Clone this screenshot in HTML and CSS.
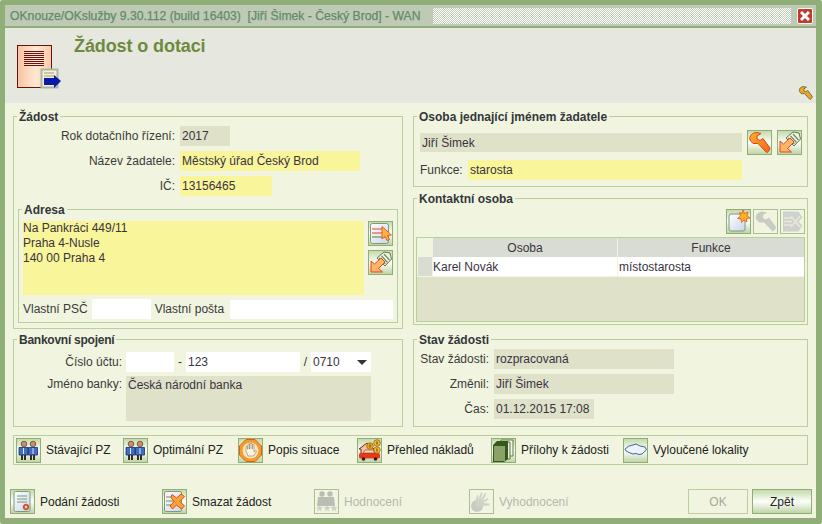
FILE: index.html
```html
<!DOCTYPE html>
<html lang="cs">
<head>
<meta charset="utf-8">
<title>OKnouze/OKslužby</title>
<link rel="stylesheet" href="styles.css">
</head>
<body>
<svg class="defs" width="0" height="0" aria-hidden="true">
  <defs>
    <linearGradient id="pg" x1="0" x2="1" y1="0" y2="0"><stop offset="0" stop-color="#f7c3a0"/><stop offset=".55" stop-color="#fde9d3"/><stop offset="1" stop-color="#f8c8a6"/></linearGradient>
    <linearGradient id="or" x1="0" x2="1" y1="0" y2="1"><stop offset="0" stop-color="#ffb030"/><stop offset="1" stop-color="#f0651c"/></linearGradient>
    <linearGradient id="blu" x1="0" x2="1" y1="0" y2="1"><stop offset="0" stop-color="#fff"/><stop offset="1" stop-color="#c9d4ec"/></linearGradient>
    <symbol id="i-wrench" viewBox="0 0 25 25"><path d="M3 10C2 6 5 2.500 10 2.500l4 1L10 6v3l3 1.500 3-2 7 9.500c0 2-2 4.500-3.500 4.500L11 13.500H6z" fill="url(#or)" stroke="#d9480f" stroke-linejoin="round"/></symbol>
    <symbol id="i-wrench-mini" viewBox="0 0 25 25"><path d="M3 10C2 6 5 2.500 10 2.500l4 1L10 6v3l3 1.500 3-2 7 9.500c0 2-2 4.500-3.500 4.500L11 13.500H6z" fill="#eda428" stroke="#76702c" stroke-width="1.500" stroke-linejoin="round"/></symbol>
    <symbol id="i-wrench-off" viewBox="0 0 25 25"><path d="M3 10C2 6 5 2.500 10 2.500l4 1L10 6v3l3 1.500 3-2 7 9.500c0 2-2 4.500-3.500 4.500L11 13.500H6z" fill="#c9cbc4"/></symbol>
    <symbol id="i-pick" viewBox="0 0 25 25"><path d="M9 8 16 2l6 1 1.500 6L17 16z" fill="#eef3e6" stroke="#5d7a45"/><path d="M11 8l6.500 6M13.500 6l6 6.500M16 4l5.500 6" stroke="#6f8f5d" stroke-width="1.300"/><path d="M3 22V11l3.500 3L13 8l4 4-6.500 6.500L14.500 22z" fill="#ffb468" stroke="#e0481c" stroke-linejoin="round"/></symbol>
    <symbol id="i-list" viewBox="0 0 25 25"><rect x="2.500" y="2.500" width="18" height="20" rx="2" fill="url(#blu)" stroke="#7f9a75"/><path d="M4 8h13M4 12h13" stroke="#e0481c" stroke-width="1.200"/><path d="M4 16h13" stroke="#6a9a4f" stroke-width="1.200"/><path d="M14 5.500 23.500 14l-4 .5 2 4-2.500 1-2-4-3 2.500z" fill="#ffb347" stroke="#d9480f" stroke-width=".8"/></symbol>
    <symbol id="i-new" viewBox="0 0 25 25"><rect x="3" y="5" width="16" height="17" rx="2" fill="url(#blu)" stroke="#7f9a75"/><path d="m17 1 1.500 3.500L22 3l-1 3.500L24 9l-3.500.5L21 13l-3-2-2.500 2.500-.5-3.500-3.500-.5 3-2.500L13.500 3.500 16 4.500z" fill="#ffb020" stroke="#e0581c" stroke-width=".8"/></symbol>
    <symbol id="i-del-off" viewBox="0 0 25 25"><path d="M3 2.500h15.500l4 6-4 4 4 4-4 6H3z" fill="#cfd1ca"/><path d="M4 9h8M4 12.500h8M4 16h8M11 7l9 11M20 7l-9 11" stroke="#e6e8e0" stroke-width="1.400"/></symbol>
    <symbol id="i-people" viewBox="0 0 25 25"><circle cx="8" cy="6" r="2.800" fill="#c98f6a" stroke="#5b3a24" stroke-width=".7"/><path d="M3 9.500h9V17H3z" fill="#3e6fc2" stroke="#13306e" stroke-width=".8"/><path d="M5 17h2v5H5zM8 17h2v5H8z" fill="#3c2a1e"/><circle cx="17" cy="6" r="2.800" fill="#c98f6a" stroke="#5b3a24" stroke-width=".7"/><path d="M12.500 9.500h9V17h-9z" fill="#3e6fc2" stroke="#13306e" stroke-width=".8"/><path d="M14 17h2v5h-2zM17 17h2v5h-2z" fill="#3c2a1e"/><path d="M7.500 10v6M17 10v6" stroke="#dfe8f7"/></symbol>
    <symbol id="i-stop" viewBox="0 0 25 25"><path d="M8 1.500h9L23.500 8v9L17 23.500H8L1.500 17V8z" fill="#f59a2c" stroke="#d9620f"/><circle cx="12.500" cy="12.500" r="8" fill="#fde7b8"/><path d="M8 13V8.500h1.500V11h.5V6h1.500v5h.5V5.500H14V11h.5V6.500H16V14l1.500-1.500 1 .8-3 4.700h-5.500z" fill="#f6f5ea" stroke="#8a7f5c" stroke-width=".6"/></symbol>
    <symbol id="i-cost" viewBox="0 0 25 25"><path d="M2 11 10 5l7 6v5H4v-5z" fill="#efc4a0" stroke="#7a2a12"/><rect x="2" y="15" width="21" height="5.500" rx="1.500" fill="#e23a1a"/><path d="M6 15l2-3h8l2 3z" fill="#f7d9c0" stroke="#a12610" stroke-width=".6"/><circle cx="6.500" cy="21" r="1.800" fill="#3a1a10"/><circle cx="18.500" cy="21" r="1.800" fill="#3a1a10"/><circle cx="13" cy="8" r="3.300" fill="#e8a820" stroke="#8a5a08" stroke-width=".7"/><circle cx="20" cy="5" r="3.300" fill="#f2bb30" stroke="#8a5a08" stroke-width=".7"/><circle cx="20" cy="12" r="3.300" fill="#f2bb30" stroke="#8a5a08" stroke-width=".7"/><path d="M20 3.500v3M20 10.500v3M13 6.500v3" stroke="#5a3a04"/></symbol>
    <symbol id="i-files" viewBox="0 0 25 25"><path d="M10 2h12v16H10z" fill="#f2f4ec" stroke="#5d7a45"/><path d="M7 4h12v17H7z" fill="#e6ebdc" stroke="#5d7a45"/><path d="M2 7l4-4h11v18l-4 3H2z" fill="#35581f"/><path d="M3 8h11v15H3z" fill="#8aa267"/></symbol>
    <symbol id="i-cloud" viewBox="0 0 25 25"><path d="M2 11 6 8l4-1 3-1 4 2 5 1 1.500 3-2.500 2-2 2-3 .5-3-1-3 .5-4-1.500-3-1.500z" fill="#eef2fb" stroke="#3d68a8"/></symbol>
    <symbol id="i-cert" viewBox="0 0 25 25"><rect x="4" y="2.500" width="16" height="20" rx="1.500" fill="url(#blu)" stroke="#7f9a75"/><path d="M7 7h10M7 10h10M7 13h10" stroke="#7f9a75"/><circle cx="16" cy="18" r="2.800" fill="#e8603a" stroke="#b83a1a" stroke-width=".7"/><circle cx="16" cy="18" r="1" fill="#fff"/></symbol>
    <symbol id="i-docx" viewBox="0 0 25 25"><rect x="2.500" y="2.500" width="17" height="20" rx="1.500" fill="url(#blu)" stroke="#7f9a75"/><path d="M4 8h8M4 12h8M4 16h8" stroke="#6f8f5d"/><path d="M10 5.500 14.500 9l4.500-4 3.500 2.500-4.500 5 4.500 4.500-3 3-5-4-4 4-2.500-3 4-4.500-3-4z" fill="#f6a535" stroke="#e0481c"/></symbol>
    <symbol id="i-eval-off" viewBox="0 0 25 25"><g fill="#babdb3"><circle cx="8" cy="5" r="2.700"/><circle cx="16" cy="5" r="2.700"/><path d="M4 8h8l1 9H3zM12 8h8l1 9h-8z"/></g><g fill="#cdd0c7"><path d="M2 18l2.500 0 1-1.500 1 1.500H9l-2 2 1 2.500-2.500-1.500L3 22.500l1-2.500zM9.500 18H12l1-1.500 1 1.500h2.500l-2 2 1 2.500-2.500-1.500-2.500 1.500 1-2.500zM16.500 18H19l1-1.500 1 1.500h2.500l-2 2 1 2.500-2.500-1.500-2.500 1.500 1-2.500z"/></g></symbol>
    <symbol id="i-hand-off" viewBox="0 0 25 25"><circle cx="8" cy="17" r="6" fill="#c8cbc2"/><path d="M6 14l2-8 1.500.5L9 11.500l3-8 1.500.5-2 7 4.500-7 1.500 1-4 7 5-3 1 1.500-5 3.500 6 .5v2l-8 .5-4 2z" fill="#cfd2c9"/></symbol>
  </defs>
</svg>

<div class="window">
  <div class="titlebar">
    <span class="apptitle">OKnouze/OKslužby 9.30.112 (build 16403)&nbsp; [Jiří Šimek - Český Brod] - WAN</span>
    <span class="grip"></span>
    <span class="close" aria-label="Zavřít">
      <svg width="12" height="12" viewBox="0 0 12 12"><path d="M2 2l8 8M10 2l-8 8" stroke="#fff" stroke-width="3"/></svg>
    </span>
  </div>

  <header class="header">
    <svg class="bigicon" width="46" height="44" viewBox="0 0 46 44">
      <rect x=".5" y=".5" width="34" height="42" fill="url(#pg)" stroke="#6b1010"/>
      <path d="M7 6.500h20M7 8.500h20M7 10.500h20M7 12.500h20M7 14.500h20M7 16.500h20M7 18.500h20M7 20.500h20" stroke="#6b1010"/>
      <rect x="24.500" y="24.500" width="16" height="18" fill="#fbf0c4" stroke="#a9b5ae" stroke-width="2"/>
      <path d="M27 28h10M27 31h10" stroke="#8aa0a8"/>
      <path d="M27 33h10v-3l7 6-7 7v-3H27z" fill="#0a1aa8"/>
    </svg>
    <h1 class="pagetitle">Žádost o dotaci</h1>
    <svg class="miniwrench" width="17" height="16" viewBox="0 0 25 25"><use href="#i-wrench-mini"/></svg>
  </header>

  <main class="main">
    <div class="grid">
      <fieldset class="box box-zadost">
        <legend>Žádost</legend>
        <div class="row row-first"><label class="lab lab-w">Rok dotačního řízení:</label><span class="fld ro w50">2017</span></div>
        <div class="row"><label class="lab lab-w">Název žadatele:</label><span class="fld req w180">Městský úřad Český Brod</span></div>
        <div class="row"><label class="lab lab-w">IČ:</label><span class="fld req w92">13156465</span></div>
        <fieldset class="box box-adresa">
          <legend>Adresa</legend>
          <div class="addr">
            <div class="fld req area">Na Pankráci 449/11<br>Praha 4-Nusle<br>140 00 Praha 4</div>
            <div class="addr-btns">
              <button class="ibtn"><svg width="25" height="25"><use href="#i-list"/></svg></button>
              <button class="ibtn"><svg width="25" height="25"><use href="#i-pick"/></svg></button>
            </div>
          </div>
          <div class="row row-own">
            <label class="lab-plain">Vlastní PSČ</label><span class="fld wh w59"></span>
            <label class="lab-plain">Vlastní pošta</label><span class="fld wh w163"></span>
          </div>
        </fieldset>
      </fieldset>

      <div class="stack">
        <fieldset class="box box-osoba">
          <legend>Osoba jednající jménem žadatele</legend>
          <div class="osoba-grid">
            <div class="osoba-fields">
              <span class="fld ro w322 h19">Jiří Šimek</span>
              <div class="row row-fn"><label class="lab-plain">Funkce:</label><span class="fld req w274">starosta</span></div>
            </div>
            <div class="osoba-btns">
              <button class="ibtn"><svg width="25" height="25"><use href="#i-wrench"/></svg></button>
              <button class="ibtn"><svg width="25" height="25"><use href="#i-pick"/></svg></button>
            </div>
          </div>
        </fieldset>
        <fieldset class="box box-kontakt">
          <legend>Kontaktní osoba</legend>
          <div class="tools">
            <button class="ibtn"><svg width="25" height="25"><use href="#i-new"/></svg></button>
            <button class="ibtn off"><svg width="25" height="25"><use href="#i-wrench-off"/></svg></button>
            <button class="ibtn off"><svg width="25" height="25"><use href="#i-del-off"/></svg></button>
          </div>
          <div class="table">
            <div class="thead"><span class="corner"></span><span class="th c1">Osoba</span><span class="th c2">Funkce</span></div>
            <div class="trow"><span class="rowhead"></span><span class="td c1">Karel Novák</span><span class="td c2">místostarosta</span></div>
          </div>
        </fieldset>
      </div>

      <fieldset class="box box-bank">
        <legend>Bankovní spojení</legend>
        <div class="row row-acct"><label class="lab lab-b">Číslo účtu:</label>
          <span class="fld wh w48"></span><span class="sep sep-d">-</span><span class="fld wh w114">123</span><span class="sep sep-s">/</span>
          <span class="fld wh w60 select">0710<i class="caret"></i></span>
        </div>
        <div class="row row-tight"><label class="lab lab-b">Jméno banky:</label><div class="fld ro bankname">Česká národní banka</div></div>
      </fieldset>

      <fieldset class="box box-stav">
        <legend>Stav žádosti</legend>
        <div class="row row-stav"><label class="lab lab-s">Stav žádosti:</label><span class="fld ro w180">rozpracovaná</span></div>
        <div class="row"><label class="lab lab-s">Změnil:</label><span class="fld ro w180">Jiří Šimek</span></div>
        <div class="row"><label class="lab lab-s">Čas:</label><span class="fld ro w100">01.12.2015 17:08</span></div>
      </fieldset>
    </div>

    <nav class="actions">
      <a class="act a1"><span class="ibtn"><svg width="25" height="25"><use href="#i-people"/></svg></span>Stávající PZ</a>
      <a class="act a2"><span class="ibtn"><svg width="25" height="25"><use href="#i-people"/></svg></span>Optimální PZ</a>
      <a class="act a3"><span class="ibtn"><svg width="25" height="25"><use href="#i-stop"/></svg></span>Popis situace</a>
      <a class="act a4"><span class="ibtn"><svg width="25" height="25"><use href="#i-cost"/></svg></span>Přehled nákladů</a>
      <a class="act a5"><span class="ibtn"><svg width="25" height="25"><use href="#i-files"/></svg></span>Přílohy k žádosti</a>
      <a class="act"><span class="ibtn"><svg width="25" height="25"><use href="#i-cloud"/></svg></span>Vyloučené lokality</a>
    </nav>

    <footer class="footer">
      <a class="act b1"><span class="ibtn"><svg width="25" height="25"><use href="#i-cert"/></svg></span>Podání žádosti</a>
      <a class="act b2"><span class="ibtn"><svg width="25" height="25"><use href="#i-docx"/></svg></span>Smazat žádost</a>
      <a class="act b3 dis"><span class="ibtn off"><svg width="25" height="25"><use href="#i-eval-off"/></svg></span>Hodnocení</a>
      <a class="act dis"><span class="ibtn off"><svg width="25" height="25"><use href="#i-hand-off"/></svg></span>Vyhodnocení</a>
      <button class="btn btn-off">OK</button>
      <button class="btn">Zpět</button>
    </footer>
  </main>
</div>
</body>
</html>
```

FILE: styles.css
```css
* { box-sizing: border-box; }
html, body { margin: 0; padding: 0; background: #fff; }
body { width: 822px; height: 524px; overflow: hidden; font: 12px/14px "Liberation Sans", Arial, sans-serif; color: #3a3a3a; }
.defs { position: absolute; }

.window { width: 822px; height: 524px; display: flex; flex-direction: column; border: solid #90ae78; border-width: 5px 6px 6px 5px; border-radius: 2px; background: #f1f5df; }

.titlebar { flex: none; height: 23px; display: flex; align-items: center; background: #bfcab5; border-bottom: 2px solid #90ae78; padding: 0 3px 0 5px; }
.apptitle { flex: none; width: 423px; font-size: 12.2px; -webkit-text-stroke: 0.25px #628a6a; color: #628a6a; white-space: nowrap; overflow: hidden; }
.grip { flex: none; width: 358px; height: 16px; background: repeating-conic-gradient(#fff 0 25%, #bfcab5 0 50%) 0 0 / 2px 2px; }
.close { flex: none; width: 16px; height: 16px; margin-left: 6px; display: flex; align-items: center; justify-content: center; background: #c23a2a; border: 1px solid #fff; border-radius: 2px; }

.header { flex: none; height: 75px; display: flex; background: #e6e8df; padding: 17px 0 0 12px; }
.bigicon { flex: none; }
.pagetitle { flex: none; margin: -10px 0 0 11px; font-size: 18px; line-height: 22px; letter-spacing: -0.1px; font-weight: bold; color: #6e8a3e; }
.miniwrench { margin: 40px 0 0 591px; flex: none; }

.main { flex: 1; min-height: 0; padding: 6px 0 0 8px; display: flex; flex-direction: column; }
.grid { display: grid; grid-template-columns: 390px 395px; column-gap: 10px; grid-template-rows: 220px 95px; row-gap: 3px; }

.box { margin: 0; padding: 0; min-width: 0; border: 1px solid #b9d09c; }
.box legend { margin-left: 3px; padding: 0 2px; font-weight: bold; height: 14px; line-height: 16px; color: #33373a; }
.box-bank legend { letter-spacing: -0.25px; }

.stack { display: flex; flex-direction: column; }
.row { display: flex; align-items: center; margin-top: 5px; }
.row-first { margin-top: 3px; }
.row-acct { margin-top: 6px; }

.lab { flex: none; text-align: right; margin-right: 5px; }
.lab-w { width: 161px; }
.lab-b { width: 108px; margin-right: 4px; }
.lab-s { width: 75px; margin-right: 5px; }
.lab-plain { flex: none; }

.fld { display: block; flex: none; height: 20px; line-height: 18px; padding: 1px 2px; white-space: nowrap; color: #3a3340; }
.ro { background: #dfe1c9; }
.req { background: #f8f59a; }
.wh { background: #fff; }
.w48 { width: 48px; }
.w50 { width: 50px; }
.w59 { width: 59px; }
.w60 { width: 60px; }
.w92 { width: 92px; }
.w100 { width: 100px; }
.w114 { width: 114px; }
.w163 { width: 163px; }
.w180 { width: 180px; }
.w274 { width: 274px; }
.w322 { width: 322px; }
.h19 { height: 19px; line-height: 18px; }

.box-zadost { height: 220px; }
.box-adresa { margin: 6px 4px 0; height: 121px; }
.addr { display: flex; margin: 5px 0 0 4px; }
.area { width: 341px; height: 74px; line-height: 15px; padding: 0; white-space: normal; }
.addr-btns { display: flex; flex-direction: column; gap: 4px; margin-left: 4px; }
.row-own { margin: 4px 0 0 4px; }
.row-own .w59 { margin: 0 4px; }
.row-own .w163 { margin-left: 6px; height: 19px; }

.ibtn { display: block; flex: none; width: 25px; height: 25px; padding: 0; margin: 0; border: 1px solid #8fae75; background: linear-gradient(#c5d9ad, #fdfefb 50%, #bfd5a6); overflow: hidden; }
.ibtn svg { display: block; margin: -1px; }
.ibtn.off { background: #f1f5df; border-color: #a9c190; }

.box-osoba { height: 78px; }
.osoba-grid { display: flex; margin: 0 0 0 6px; }
.osoba-fields { width: 322px; margin-top: 10px; }
.row-fn { margin-top: 8px; }
.row-fn .lab-plain { width: 48px; }
.osoba-btns { display: flex; gap: 5px; margin: 7px 0 0 5px; }

.box-kontakt { height: 134px; margin-top: 4px; }
.tools { display: flex; justify-content: flex-end; gap: 2px; margin: 4px 2px 3px 0; }
.table { margin: 0 2px; height: 85px; border: 1px solid #b9d09c; background: #dfe1c9; }
.thead { display: flex; height: 19px; background: #f1f5df; }
.trow { display: flex; height: 20px; background: #f1f5df; }
.corner { flex: none; width: 16px; }
.rowhead { flex: none; width: 14px; margin: 0 1px; background: #d9dcd3; height: 19px; }
.th { background: #d9dcd3; text-align: center; line-height: 20px; color: #3a3340; border-right: 1px solid #f1f5df; }
.td { background: #fff; line-height: 20px; height: 19px; color: #3a3340; border-right: 1px solid #f1f5df; }
.td.c2 { padding-left: 1px; }
.c1 { flex: none; width: 185px; }
.c2 { flex: none; width: 186px; border-right: 0; }

.box-bank { height: 95px; }
.sep { flex: none; color: #3a3340; }
.sep-d { width: 12px; text-align: center; }
.sep-s { width: 11px; text-align: center; }
.select { position: relative; }
.caret { position: absolute; right: 4px; top: 8px; width: 0; height: 0; border: 5px solid transparent; border-top: 5px solid #333; border-bottom: 0; }
.row-tight { align-items: flex-start; margin-top: 4px; }
.row-tight .lab { line-height: 16px; }
.bankname { width: 245px; height: 45px; padding-top: 0; }

.box-stav { height: 95px; width: 395px; }
.row-stav { margin-top: 3px; }

.actions { display: flex; align-items: center; width: 795px; height: 30px; margin-top: 8px; padding-left: 2px; border: 1px solid #b9d09c; }
.act { display: flex; align-items: center; gap: 5px; color: #222; white-space: nowrap; }
.a1 { width: 107px; }
.a2 { width: 115px; }
.a3 { width: 119px; }
.a4 { width: 134px; }
.a5 { width: 132px; }

.footer { display: flex; align-items: center; margin: 24px 0 0 -3px; height: 25px; }
.b1 { width: 152px; }
.b2 { width: 152px; }
.b3 { width: 155px; }
.dis { color: #b5b9ad; }
.dis + .dis { width: 219px; }
.btn { flex: none; width: 60px; height: 25px; margin: 0 4px 0 0; padding: 0; font: 12px "Liberation Sans", Arial, sans-serif; color: #222; border: 1px solid #8fae75; background: linear-gradient(#c5d9ad, #fdfefb 50%, #bfd5a6); }
.btn-off { background: #f1f5df; color: #a5a99e; border-color: #b9d09c; }
```
